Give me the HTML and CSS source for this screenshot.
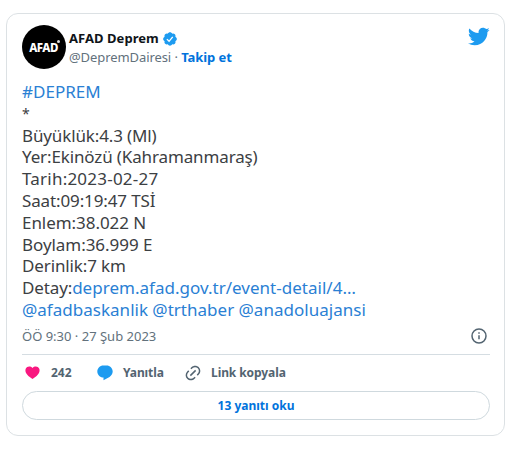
FILE: index.html
```
<!DOCTYPE html>
<html lang="tr">
<head>
    <meta charset="UTF-8">
    <meta name="viewport" content="width=device-width, initial-scale=1.0">
    <title>AFAD Deprem</title>
    <link rel="stylesheet" href="styles.css">
</head>
<body>

    <article class="tweet">
        <header class="tweet-header">
            <div class="avatar"><span class="avatar-text">AFAD</span><span class="avatar-dot"></span></div>
            <div class="author">
                <div class="author-name">
                    <span>AFAD Deprem</span>
                    <svg class="verified" viewBox="0 0 24 24"><path fill="#1d9bf0" d="M22.25 12c0-1.43-.88-2.67-2.19-3.34.46-1.39.2-2.9-.81-3.91s-2.52-1.27-3.91-.81c-.66-1.31-1.91-2.19-3.34-2.19s-2.67.88-3.33 2.19c-1.4-.46-2.91-.2-3.92.81s-1.26 2.52-.8 3.91c-1.31.67-2.2 1.91-2.2 3.34s.89 2.67 2.2 3.34c-.46 1.39-.21 2.9.8 3.91s2.52 1.26 3.91.81c.67 1.31 1.91 2.19 3.34 2.19s2.68-.88 3.34-2.19c1.39.45 2.9.2 3.91-.81s1.27-2.52.81-3.91c1.31-.67 2.19-1.91 2.19-3.34z"/><path fill="none" stroke="#fff" stroke-width="2" d="M7.3 12.2l3.3 3.3 5.5-6.8"/></svg>
                </div>
                <div class="author-handle"><span class="handle">@DepremDairesi</span> <span class="dot">·</span> <a class="follow">Takip et</a></div>
            </div>
            <svg class="bird" viewBox="0 0 24 24"><path fill="#1d9bf0" d="M23.643 4.937c-.835.37-1.732.62-2.675.733.962-.576 1.7-1.49 2.048-2.578-.9.534-1.897.922-2.958 1.13-.85-.904-2.06-1.47-3.4-1.47-2.572 0-4.658 2.086-4.658 4.66 0 .364.042.718.12 1.06-3.873-.195-7.304-2.05-9.602-4.868-.4.69-.63 1.49-.63 2.342 0 1.616.823 3.043 2.072 3.878-.764-.025-1.482-.234-2.11-.583v.06c0 2.257 1.605 4.14 3.737 4.568-.392.106-.803.162-1.227.162-.3 0-.593-.028-.877-.082.593 1.85 2.313 3.198 4.352 3.234-1.595 1.25-3.604 1.995-5.786 1.995-.376 0-.747-.022-1.112-.065 2.062 1.323 4.51 2.093 7.14 2.093 8.57 0 13.255-7.098 13.255-13.254 0-.2-.005-.402-.014-.602.91-.658 1.7-1.477 2.323-2.41z"/></svg>
        </header>

        <div class="tweet-text">
            <div><a class="hashtag">#DEPREM</a></div>
            <div class="star">*</div>
            <div>Büyüklük:4.3 (Ml)</div>
            <div>Yer:Ekinözü (Kahramanmaraş)</div>
            <div class="day">Tarih:2023-02-27</div>
            <div>Saat:09:19:47 TSİ</div>
            <div class="coord">Enlem:38.022 N</div>
            <div class="coord">Boylam:36.999 E</div>
            <div>Derinlik:7 km</div>
            <div>Detay:<a>deprem.afad.gov.tr/event-detail/4…</a></div>
            <div class="mentions"><a>@afadbaskanlik</a> <a>@trthaber</a> <a>@anadoluajansi</a></div>
        </div>

        <div class="tweet-meta">
            <span class="date">ÖÖ 9:30 · 27 Şub 2023</span>
            <svg class="info" viewBox="0 0 18 18" fill="none" stroke="#536471"><circle cx="9" cy="9" r="7" stroke-width="1.5"/><path stroke-width="1.5" d="M9 8.3v4M9 5.3v1.5"/></svg>
        </div>

        <div class="actions">
            <span class="action like">
                <svg viewBox="0 0 24 24"><path fill="#f91880" d="M20.88 13.19c-1.35 2.48-4.01 5.12-8.38 7.67l-.5.3-.5-.3c-4.37-2.55-7.03-5.19-8.39-7.67-1.36-2.5-1.41-4.86-.51-6.67.89-1.79 2.65-2.91 4.6-3.01 1.65-.09 3.37.56 4.8 2.01 1.43-1.45 3.15-2.1 4.8-2.01 1.95.1 3.7 1.22 4.59 3.01.9 1.81.85 4.17-.51 6.67z"/></svg>
                <span>242</span>
            </span>
            <span class="action reply">
                <svg viewBox="0 0 24 24"><path fill="#1d9bf0" d="M1.75 10c0-4.42 3.58-8 8-8h4.37c4.49 0 8.13 3.64 8.13 8.13 0 2.96-1.61 5.68-4.2 7.11L10 21.7v-3.69h-.07c-4.49.1-8.18-3.51-8.18-8.01z"/></svg>
                <span>Yanıtla</span>
            </span>
            <span class="action copy">
                <svg viewBox="0 0 24 24"><path fill="#536471" d="M18.36 5.64c-1.95-1.96-5.11-1.96-7.07 0L9.88 7.05 8.46 5.64l1.42-1.42c2.73-2.73 7.16-2.73 9.9 0 2.73 2.74 2.73 7.17 0 9.9l-1.42 1.42-1.41-1.42 1.41-1.41c1.96-1.96 1.96-5.12 0-7.07zm-2.12 3.53l-7.07 7.07-1.41-1.41 7.07-7.07 1.41 1.41zm-12.02.71l1.42-1.42 1.41 1.42-1.41 1.41c-1.96 1.96-1.96 5.12 0 7.07 1.95 1.96 5.11 1.96 7.07 0l1.41-1.41 1.42 1.41-1.42 1.42c-2.73 2.73-7.16 2.73-9.9 0-2.73-2.74-2.73-7.17 0-9.9z"/></svg>
                <span>Link kopyala</span>
            </span>
        </div>

        <a class="replies">13 yanıtı oku</a>
    </article>

</body>
</html>
```
FILE: styles.css
```
* {
    box-sizing: border-box;
}

body {
    font-family: "Noto Sans", "Open Sans", sans-serif;
    background: #fff;
    color: #0f1419;
    margin: 0;
    padding: 13px 10px 0 6px;
}

.tweet {
    height: 423px;
    border: 1px solid #dce1e4;
    border-radius: 12px;
    padding: 11px 14px 0 15px;
}

.tweet-header {
    display: flex;
    height: 44px;
}

.avatar {
    position: relative;
    width: 44px;
    height: 44px;
    border-radius: 50%;
    background: #000;
    display: flex;
    align-items: center;
    justify-content: center;
}

.avatar-text {
    color: #fff;
    font-size: 11.5px;
    font-weight: 800;
    letter-spacing: -0.5px;
    margin-right: 1px;
}

/* small mark above the last letter */
.avatar-dot {
    position: absolute;
    top: 15px;
    right: 6px;
    width: 3px;
    height: 3px;
    border-radius: 50%;
    background: #ddd;
}

.author {
    flex: 1;
    margin-left: 3px;
    padding-top: 4px;
}

.author-name {
    display: flex;
    align-items: center;
    font-size: 13px;
    font-weight: 700;
    line-height: 19px;
    letter-spacing: 0.05px;
}

.verified {
    width: 16px;
    height: 16px;
    margin-left: 3px;
}

.author-handle {
    font-size: 13px;
    line-height: 18px;
    letter-spacing: -0.08px;
    color: #62717c;
}

.follow {
    color: #0073dc;
    font-weight: 700;
}

.bird {
    width: 23px;
    height: 23px;
}

.tweet-text {
    margin-top: 12px;
    font-size: 17px;
    line-height: 21.8px;
    letter-spacing: -0.13px;
    color: #3c4043;
    white-space: nowrap;
}

.tweet-text a {
    color: #2a80d4;
    letter-spacing: 0.02px;
}

.tweet-text .star {
    font-size: 14px;
}

.tweet-text .day {
    letter-spacing: 0.22px;
}

.tweet-text .coord {
    letter-spacing: -0.05px;
}

.tweet-meta {
    display: flex;
    align-items: center;
    justify-content: space-between;
    height: 34px;
    padding-bottom: 2px;
    font-size: 13px;
    color: #62717c;
    border-bottom: 1px solid #d5dde2;
}

.info {
    width: 18px;
    height: 18px;
    margin-right: 2px;
}

.actions {
    display: flex;
    height: 36px;
    font-size: 12px;
    font-weight: 700;
    color: #536471;
}

.action {
    display: flex;
    align-items: center;
}

.action svg {
    width: 18px;
    height: 18px;
    margin: 0 9px 0 2px;
}

.action.like svg {
    width: 17px;
    height: 17px;
    margin-right: 10px;
}

.like {
    width: 72px;
}

.reply {
    width: 88px;
    letter-spacing: -0.1px;
}

.copy {
    letter-spacing: -0.08px;
}

.replies {
    display: flex;
    align-items: center;
    justify-content: center;
    height: 29px;
    border: 1px solid #cfd9de;
    border-radius: 15px;
    font-size: 12px;
    font-weight: 700;
    color: #0073dc;
}
```
